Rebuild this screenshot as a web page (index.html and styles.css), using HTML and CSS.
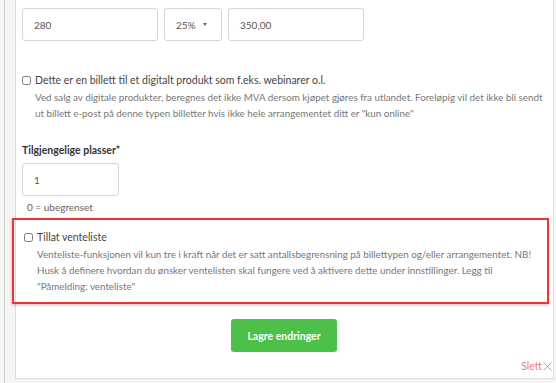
FILE: index.html
```html
<!DOCTYPE html>
<html lang="no">
<head>
    <meta charset="UTF-8">
    <title>Rediger billettype</title>
    <link rel="stylesheet" href="styles.css">
</head>
<body>
    <div class="page">
        <div class="card">
            <div class="price-row">
                <div class="field wide">280</div>
                <div class="field select">25% <span class="caret"></span></div>
                <div class="field wide">350,00</div>
            </div>

            <div class="check-group digital">
                <label class="check-label"><input type="checkbox"> Dette er en billett til et digitalt produkt som f.eks. webinarer o.l.</label>
                <p class="help">Ved salg av digitale produkter, beregnes det ikke MVA dersom kjøpet gjøres fra utlandet. Foreløpig vil det ikke bli sendt ut billett e-post på denne typen billetter hvis ikke hele arrangementet ditt er "kun online"</p>
            </div>

            <div class="seats">
                <h4>Tilgjengelige plasser*</h4>
                <div class="field small">1</div>
                <p class="hint">0 = ubegrenset</p>
            </div>

            <!-- Highlighted waitlist option -->
            <div class="check-group highlight">
                <label class="check-label"><input type="checkbox"> Tillat venteliste</label>
                <p class="help">Venteliste-funksjonen vil kun tre i kraft når det er satt antallsbegrensning på billettypen og/eller arrangementet. NB! Husk å definere hvordan du ønsker ventelisten skal fungere ved å aktivere dette under innstillinger. Legg til "Påmelding: venteliste"</p>
            </div>

            <div class="actions">
                <button class="save">Lagre endringer</button>
            </div>

            <div class="delete">Slett<svg width="9" height="9" viewBox="0 0 9 9"><path d="M0.5 0.5 L8.5 8.5 M8.5 0.5 L0.5 8.5" stroke="#f07a7a" stroke-width="0.9" fill="none"/></svg></div>
        </div>
    </div>
</body>
</html>
```

FILE: styles.css
```css
body {
    margin: 0;
    background: #f5f5f5;
    font-family: Lato, "Liberation Sans", sans-serif;
    color: #444;
}

.page {
    margin-left: 4px;
    border-left: 1px solid #cfcfcf;
    padding: 0 2px 8px 10px;
    height: 375px;
}

.card {
    background: #fff;
    border: 1px solid #dcdcdc;
    border-top: none;
    padding: 8px 3px 6px 6px;
}

.price-row {
    display: flex;
    gap: 6px;
}

.field {
    box-sizing: border-box;
    height: 33px;
    border: 1px solid #d6d6d6;
    border-radius: 3px;
    padding: 0 11px;
    display: flex;
    align-items: center;
    font-size: 10px;
    color: #555;
}

.field.wide {
    width: 136px;
}

.field.select {
    width: 58px;
    padding-left: 11px;
}

.caret {
    margin-left: 7px;
    border-left: 2.5px solid transparent;
    border-right: 2.5px solid transparent;
    border-top: 3px solid #666;
}

.field.small {
    width: 97px;
}

.check-group {
    font-size: 9.8px;
}

.check-group.digital {
    margin-top: 31px;
}

.check-label {
    display: flex;
    align-items: center;
    gap: 4px;
    color: #444;
    font-size: 10.5px;
    line-height: 17px;
}

.check-label input {
    width: 9px;
    height: 9px;
    margin: 0;
}

.help {
    margin: 0 0 0 13px;
    color: #777;
    line-height: 16px;
}

.seats {
    margin-top: 22px;
}

.seats h4 {
    margin: 0 0 6px;
    font-size: 10.5px;
    line-height: 14px;
    color: #333;
}

.hint {
    margin: 4px 0 0 5px;
    font-size: 10px;
    line-height: 14px;
    color: #666;
}

.highlight {
    margin: 4px 1px 0 -10px;
    padding: 9px 4px 8px 10px;
    border: 2px solid #e8343a;
    box-shadow: 0 1px 3px rgba(0, 0, 0, 0.25);
}

.actions {
    display: flex;
    justify-content: center;
    margin-top: 15px;
    margin-right: 4px;
}

.save {
    width: 106px;
    height: 33px;
    border: none;
    border-radius: 3px;
    background: #4cc049;
    color: #fff;
    font-family: Lato, sans-serif;
    font-weight: bold;
    font-size: 10.5px;
}

.delete {
    display: flex;
    justify-content: flex-end;
    align-items: center;
    gap: 1px;
    margin-top: 8px;
    margin-right: -2px;
    font-size: 10.5px;
    color: #f07a7a;
}
```
